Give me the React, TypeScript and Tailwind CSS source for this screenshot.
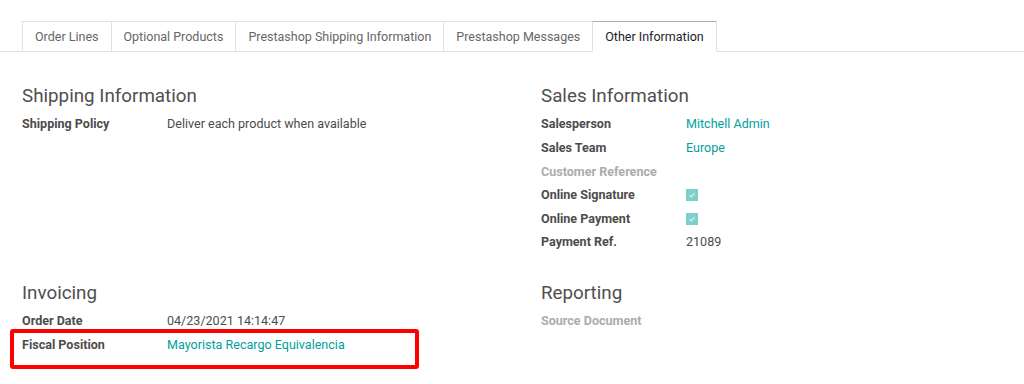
import type { ReactNode } from 'react';

const tabs = ['Order Lines', 'Optional Products', 'Prestashop Shipping Information', 'Prestashop Messages', 'Other Information'];

function Heading({ children }: { children: ReactNode }) {
    return <h2 className="text-[18.8px] leading-[24px] text-[#4f4f4f] font-normal mb-[5px]">{children}</h2>;
}

function Row({ label, muted, children }: { label: string; muted?: boolean; children?: ReactNode }) {
    return (
        <div className="flex items-center h-[23.6px] text-[12.55px]">
            <div className={`w-[145px] shrink-0 font-bold ${muted ? 'text-[#acacac]' : 'text-[#4c4c4c]'}`}>{label}</div>
            <div className="text-[#4c4c4c]">{children}</div>
        </div>
    );
}

function Link({ children }: { children: ReactNode }) {
    return <span className="text-[#00a09d]">{children}</span>;
}

function Check() {
    return (
        <span className="inline-flex w-[12px] h-[12px] bg-[#7fd0cb] items-center justify-center mt-[1px]">
            <svg width="8" height="8" viewBox="0 0 8 8">
                <path d="M1.5 4.3 L3.2 5.8 L6.5 2.3" fill="none" stroke="#ffffff" strokeOpacity="0.6" strokeWidth="1.3" />
            </svg>
        </span>
    );
}

export default function App() {
    return (
        <div className="w-[1024px] h-[384px] bg-white overflow-hidden font-['Roboto',sans-serif]">
            {/* Tabs */}
            <div className="pt-[21px] border-b border-[#dee2e6]">
                <div className="flex ml-[22px] -mb-px">
                    {tabs.map((t, i) => {
                        const active = i === tabs.length - 1;
                        return (
                            <div
                                key={t}
                                className={`h-[31px] flex items-center pt-[1px] px-[12px] text-[12.5px] border ${i > 0 ? '-ml-px' : ''} ${
                                    active
                                        ? 'border-[#dee2e6] border-t-[#b9a5b4] border-b-white text-[#212529] bg-white'
                                        : 'border-[#dee2e6] text-[#666666]'
                                }`}
                            >
                                {t}
                            </div>
                        );
                    })}
                </div>
            </div>

            {/* Content */}
            <div className="grid grid-cols-[519px_1fr] pl-[22px] pt-[32px] gap-y-[26px]">
                <div>
                    <Heading>Shipping Information</Heading>
                    <Row label="Shipping Policy">Deliver each product when available</Row>
                </div>
                <div>
                    <Heading>Sales Information</Heading>
                    <Row label="Salesperson"><Link>Mitchell Admin</Link></Row>
                    <Row label="Sales Team"><Link>Europe</Link></Row>
                    <Row label="Customer Reference" muted />
                    <Row label="Online Signature"><Check /></Row>
                    <Row label="Online Payment"><Check /></Row>
                    <Row label="Payment Ref.">21089</Row>
                </div>
                <div>
                    <Heading>Invoicing</Heading>
                    <Row label="Order Date">04/23/2021 14:14:47</Row>
                    <div className="relative">
                        <Row label="Fiscal Position"><Link>Mayorista Recargo Equivalencia</Link></Row>
                        <div className="absolute left-[-12px] top-[-4px] w-[409px] h-[40px] border-[4px] border-[#ff0000] rounded-[3px] pointer-events-none" />
                    </div>
                </div>
                <div>
                    <Heading>Reporting</Heading>
                    <Row label="Source Document" muted />
                </div>
            </div>
        </div>
    );
}
